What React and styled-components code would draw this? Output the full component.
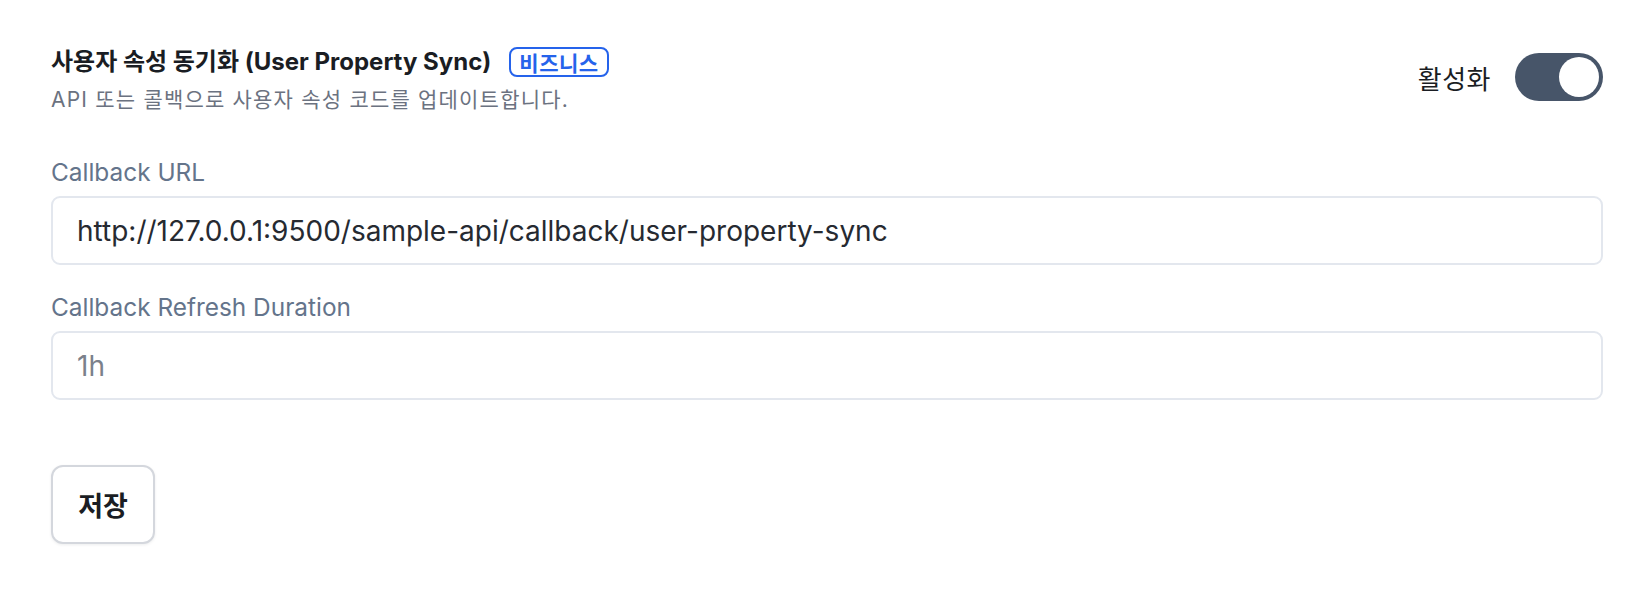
import React from "react";
import styled, { createGlobalStyle } from "styled-components";

const palette = {
  ink: "#1a1d23",
  text: "#262a31",
  sub: "#6b7280",
  label: "#64748b",
  placeholder: "#7b818b",
  line: "#e3e7ee",
  btnLine: "#d4d7dd",
  blue: "#2563eb",
  slate: "#475569",
};

const SettingsPage = () => {
  return (
    <>
      <GlobalStyle />
      <Page>
        <Header>
          <HeadText>
            <TitleRow>
              <Title>사용자 속성 동기화 (User Property Sync)</Title>
              <Badge>비즈니스</Badge>
            </TitleRow>
            <SubText>API 또는 콜백으로 사용자 속성 코드를 업데이트합니다.</SubText>
          </HeadText>
          <SwitchGroup>
            <SwitchLabel>활성화</SwitchLabel>
            <Switch type="button" role="switch" aria-checked="true" $on>
              <Knob />
            </Switch>
          </SwitchGroup>
        </Header>

        <Form>
          <Field>
            <Label htmlFor="callback-url">Callback URL</Label>
            <Input
              id="callback-url"
              defaultValue="http://127.0.0.1:9500/sample-api/callback/user-property-sync"
            />
          </Field>
          <Field>
            <Label htmlFor="callback-duration">Callback Refresh Duration</Label>
            <Input id="callback-duration" placeholder="1h" />
          </Field>
        </Form>

        <SaveButton type="button">저장</SaveButton>
      </Page>
    </>
  );
};

export default SettingsPage;

const GlobalStyle = createGlobalStyle`
  * {
    box-sizing: border-box;
  }
  body {
    margin: 0;
    background: #ffffff;
    font-family: Inter, "Noto Sans CJK KR", sans-serif;
  }
`;

const Page = styled.div`
  padding: 44px 37px 40px 51px;
  display: flex;
  flex-direction: column;
  align-items: flex-start;
`;

const Header = styled.div`
  width: 100%;
  display: flex;
  justify-content: space-between;
  align-items: center;
`;

const HeadText = styled.div`
  display: flex;
  flex-direction: column;
  gap: 4px;
`;

const TitleRow = styled.div`
  display: flex;
  align-items: center;
  gap: 18px;
  height: 36px;
`;

const Title = styled.h2`
  margin: 0;
  font-size: 24px;
  font-weight: 700;
  line-height: 36px;
  color: ${palette.ink};
`;

const Badge = styled.span`
  display: inline-flex;
  align-items: center;
  height: 30px;
  padding: 0 8px;
  border: 2px solid ${palette.blue};
  border-radius: 8px;
  color: ${palette.blue};
  font-size: 21px;
  font-weight: 700;
  letter-spacing: 0.5px;
`;

const SubText = styled.p`
  margin: 0;
  font-size: 21px;
  line-height: 32px;
  letter-spacing: 1.2px;
  color: ${palette.sub};
`;

const SwitchGroup = styled.div`
  display: flex;
  align-items: center;
  gap: 24px;
  margin-bottom: 6px;
`;

const SwitchLabel = styled.span`
  font-size: 26px;
  letter-spacing: 0.5px;
  color: ${palette.ink};
`;

const Switch = styled.button`
  width: 88px;
  height: 48px;
  padding: 0 4px;
  border: none;
  border-radius: 24px;
  background: ${({ $on }) => ($on ? palette.slate : "#cbd5e1")};
  display: flex;
  align-items: center;
  justify-content: ${({ $on }) => ($on ? "flex-end" : "flex-start")};
  cursor: pointer;
`;

const Knob = styled.span`
  width: 40px;
  height: 40px;
  border-radius: 50%;
  background: #ffffff;
`;

const Form = styled.div`
  width: 100%;
  margin-top: 38px;
  display: flex;
  flex-direction: column;
  gap: 24px;
`;

const Field = styled.div`
  display: flex;
  flex-direction: column;
  gap: 6px;
`;

const Label = styled.label`
  font-size: 24.4px;
  line-height: 36px;
  color: ${palette.label};
`;

const Input = styled.input`
  width: 100%;
  height: 69px;
  padding: 0 24px;
  border: 2px solid ${palette.line};
  border-radius: 9px;
  font-family: Inter, "Noto Sans CJK KR", sans-serif;
  font-size: 28px;
  color: ${palette.text};
  background: #ffffff;
  outline: none;

  &::placeholder {
    color: ${palette.placeholder};
  }
`;

const SaveButton = styled.button`
  margin-top: 65px;
  width: 104px;
  height: 79px;
  border: 2px solid ${palette.btnLine};
  border-radius: 12px;
  background: #ffffff;
  box-shadow: 0 1px 3px rgba(15, 23, 42, 0.08);
  font-family: Inter, "Noto Sans CJK KR", sans-serif;
  font-size: 27px;
  font-weight: 700;
  color: ${palette.ink};
  cursor: pointer;
`;
